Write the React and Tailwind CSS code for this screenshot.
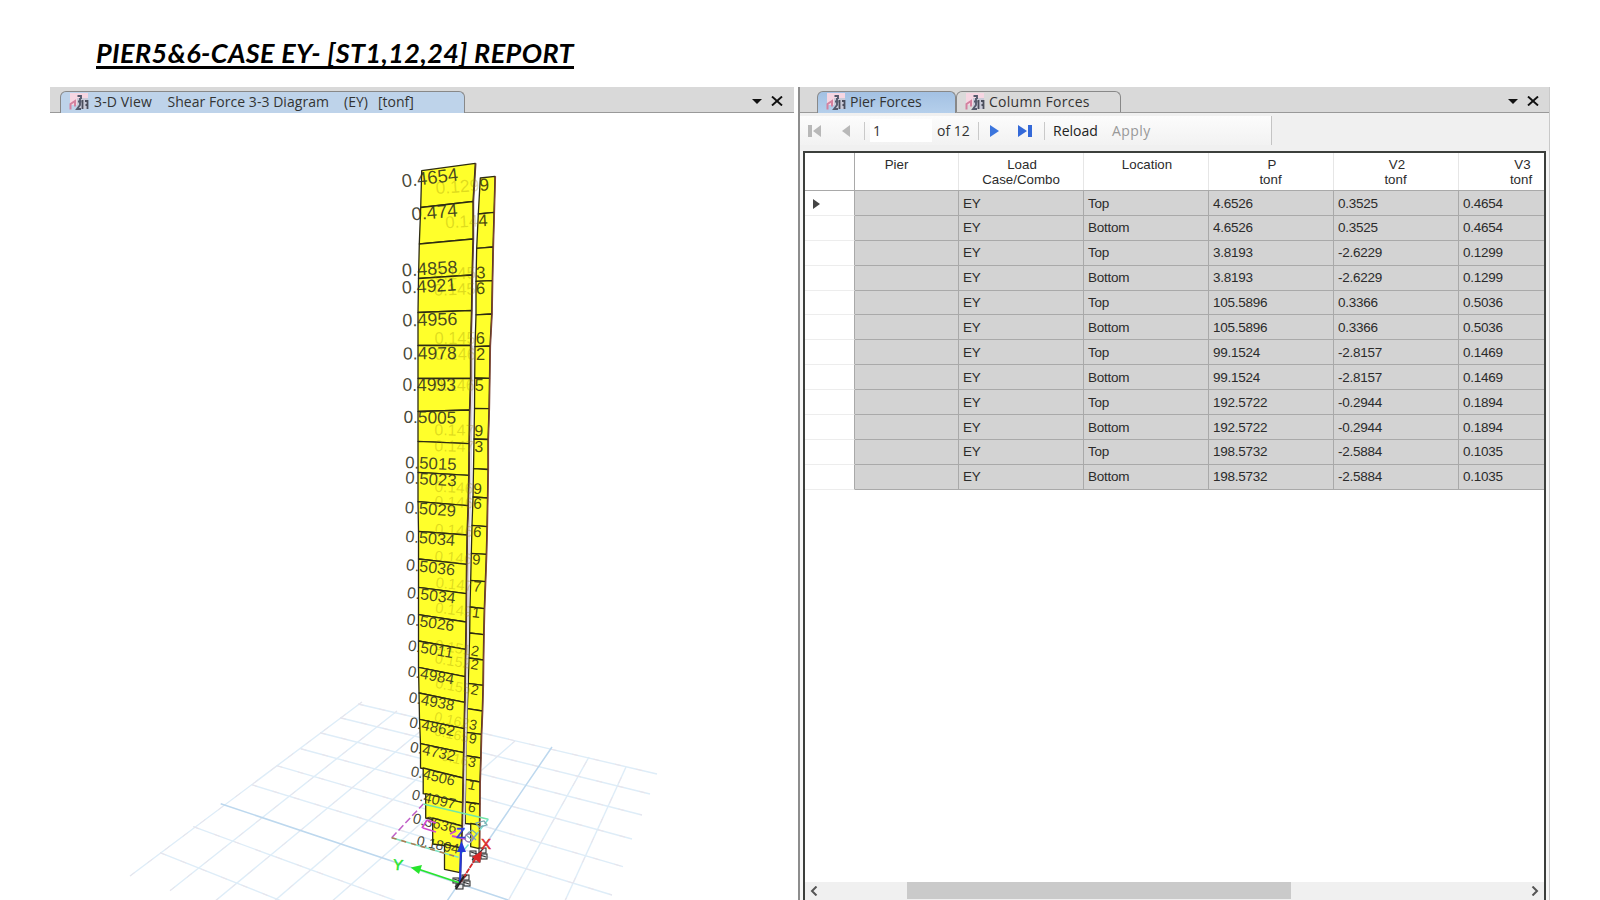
import React from "react";

const LEFT = [
  [421.7, 170.7, 475.3, 163.3], [420.7, 207.5, 473, 201.5], [419.3, 244, 473, 239], [418.5, 278.5, 472, 275],
  [418, 312.5, 471.5, 310.5], [418, 345.5, 470.5, 345.5], [418, 378.3, 470.5, 378.5], [418, 411.5, 469.5, 410],
  [418, 441.3, 469, 443.7], [418, 472.3, 468.7, 475.3], [418, 501.7, 468, 505.7], [418.5, 531.3, 467, 535],
  [418.5, 559, 466.5, 564.3], [418.5, 587.3, 466.2, 593.7], [418.5, 614.7, 466, 622], [418.5, 641, 465.5, 649.3],
  [418.5, 667.3, 465, 676.7], [419, 693, 464.6, 702.3], [419.5, 719.3, 464, 728.7], [420.5, 743.7, 463.5, 752.7],
  [423.2, 768, 463, 778], [425.7, 793.7, 462.5, 802.7], [432.7, 818, 462, 826], [444.5, 844, 461, 848], [444.5, 869.3, 460, 872.7],
];

const RIGHT = [
  [480.3, 178, 495, 176.3], [478.3, 214, 494, 212.3], [476.7, 248.3, 493, 247], [476, 281.3, 492.3, 280.7],
  [476, 314.8, 491.7, 314], [475, 346.7, 490, 346], [474.7, 378, 489.5, 378.3], [474.5, 408.3, 489, 408.7],
  [474, 439, 488, 439.5], [473.5, 468.7, 488, 469.5], [473, 497, 487.5, 498], [472, 525.3, 487, 526.7],
  [471.3, 553.3, 486.3, 554.3], [470.7, 580.3, 485.3, 581.7], [470, 607, 484.3, 608.7], [469.7, 633, 483.7, 634.7],
  [469, 658, 483.3, 660], [468.3, 683.3, 483, 685.3], [467.3, 708.7, 482.3, 711], [466.7, 732.3, 481.3, 734.3],
  [466, 755.7, 480.7, 758], [465.7, 779.3, 479.9, 782], [465.3, 802, 479.7, 804], [470.7, 823.5, 479.5, 825], [470.7, 846.7, 479.3, 848.7],
];

const LABELS = [
  ["0.4654", 402.5, 187.5, -7, 18.5], ["0.474", 412, 220.5, -5, 18.5], ["0.4858", 402.3, 276.5, -3.5, 18.2],
  ["0.4921", 402.3, 293.8, -3.5, 17.8], ["0.4956", 402.5, 326.5, -1.5, 18], ["0.4978", 403, 359.5, -0.5, 17.6],
  ["0.4993", 402.5, 391.3, 0, 17.5], ["0.5005", 403.5, 422.8, 1, 17.2], ["0.5015", 405, 468, 2.5, 16.8],
  ["0.5023", 405, 483.3, 3.5, 16.8], ["0.5029", 404.5, 513, 4, 16.7], ["0.5034", 405, 541.8, 5, 16.3],
  ["0.5036", 405.5, 570, 6.5, 16.1], ["0.5034", 406.5, 597.7, 7, 15.9], ["0.5026", 406, 624.3, 8.5, 15.7],
  ["0.5011", 407.3, 650.3, 10, 15.3], ["0.4984", 407, 676, 10.5, 15.3], ["0.4938", 408, 702, 11, 15.1],
  ["0.4862", 408.5, 727, 12, 15.1], ["0.4732", 409.3, 751.5, 12.5, 15], ["0.4506", 410, 775.7, 13, 14.7],
  ["0.4097", 411, 799, 13, 14.6], ["0.3636", 412, 822.7, 14, 14.6], ["0.1894", 416, 845, 12, 14],
];

const BACK = [
  ["0.129", "9", 479.7, 191, -4, 17.5], ["0.14", "4", 478.5, 226.5, -3, 17], ["0.145", "3", 476.2, 278.5, -2, 17],
  ["0.145", "6", 475.9, 294.3, -2, 16.8], ["0.145", "6", 475.7, 344.2, 0, 16.5], ["0.146", "2", 476, 359.8, 0, 16.5],
  ["0.146", "5", 474.7, 390.6, 0, 16.2], ["0.147", "9", 474.3, 435.9, 1, 16], ["0.147", "3", 474.3, 452, 1, 16],
  ["0.146", "9", 473, 493.7, 3, 15.5], ["0.146", "6", 473, 508.5, 3, 15.5], ["0.146", "6", 472.7, 536.8, 4, 15.3],
  ["0.146", "9", 471.7, 564.3, 5, 15], ["0.147", "7", 472.5, 591.3, 6, 15], ["0.149", "1", 471.5, 617, 7, 14.8],
  ["0.151", "2", 470.3, 655.3, 9, 14.6], ["0.152", "2", 470, 668.7, 9, 14.5], ["0.155", "2", 470, 694, 10, 14.3],
  ["0.162", "3", 468.3, 728.7, 12, 14.2], ["0.165", "9", 468, 742.5, 12, 14], ["0.16", "3", 467.3, 766, 12, 14],
  ["", "1", 467.3, 788.7, 12, 14], ["", "6", 467.3, 811.3, 12, 14],
];

const GRID = [
  [358, 704, 657, 774], [340, 717.7, 650, 794], [320, 732.7, 642, 815], [300.7, 748.7, 632, 839],
  [276.7, 765.7, 623, 866.7], [251.7, 784.7, 612, 895], [193.3, 826.7, 402, 903], [160, 852.7, 284, 902],
  [130, 876, 362, 702], [170, 890.7, 397, 711], [214, 902, 434, 720], [272, 903, 474, 730],
  [330, 903, 515, 741], [508, 901, 589, 757], [564, 903, 626, 767],
];

const quads = (pts) =>
  pts.slice(0, -1).map((p, i) => {
    const n = pts[i + 1];
    const inset = n[0] - p[0] > 2 ? p[0] : n[0];
    return `${p[0]},${p[1]} ${p[2]},${p[3]} ${n[2]},${n[3]} ${inset},${n[1]}`;
  });

function Node({ x, y }) {
  return (
    <g transform={`translate(${x} ${y})`} fill="#ddd" fillOpacity="0.5" stroke="#333" strokeWidth="1.1">
      <rect x="-8" y="-3" width="6" height="5" />
      <rect x="1" y="-6" width="7" height="5" />
      <rect x="-5" y="3" width="7" height="5" />
      <rect x="3" y="0" width="6" height="5" />
      <path d="M-6 6 L6 -6 M-7 -2 L8 3" fill="none" />
    </g>
  );
}

function ForceDiagram() {
  return (
    <svg viewBox="50 113 744 787" className="block h-[787px] w-[744px] font-['Liberation_Sans',sans-serif]">
      <g stroke="#deedf8" strokeWidth="1.4">
        {GRID.map((g, i) => (
          <line key={i} x1={g[0]} y1={g[1]} x2={g[2]} y2={g[3]} />
        ))}
      </g>
      <g stroke="#ece4ea" strokeWidth="1" strokeDasharray="6 16" opacity="0.9">
        {GRID.map((g, i) => (
          <line key={i} x1={g[0]} y1={g[1]} x2={g[2]} y2={g[3]} />
        ))}
      </g>
      <path d="M220.7 803.7 L508 900 M447 901 L552 747" stroke="#bdd8ee" strokeWidth="1.5" fill="none" />

      <g fill="#ffff2b" stroke="#2d2b12" strokeWidth="1.3" strokeLinejoin="round">
        {quads(RIGHT).map((p, i) => (
          <polygon key={i} points={p} />
        ))}
        {quads(LEFT).map((p, i) => (
          <polygon key={i} points={p} />
        ))}
      </g>
      <g fill="none" strokeWidth="1.4">
        <polyline points={RIGHT.map((p) => `${p[2] + 0.4},${p[3]}`).join(" ")} stroke="#7d4435" />
        <polyline points={LEFT.map((p) => `${p[2] + 0.5},${p[3]}`).join(" ")} stroke="#5d3c30" />
        <polyline points={LEFT.slice(5, 23).map((p) => `${p[2] + 2.2},${p[3]}`).join(" ")} stroke="#d9d4dc" strokeWidth="1.5" />
      </g>

      {BACK.map(([a, b, x, y, r, s], i) => (
        <g key={i} transform={`translate(${x} ${y}) rotate(${r})`} fontSize={s}>
          <text textAnchor="end" fill="#8d8000" fillOpacity="0.28">{a}</text>
          <text fill="#35340c" fillOpacity="0.9">{b}</text>
        </g>
      ))}
      {LABELS.map(([t, x, y, r, s], i) => (
        <text key={i} transform={`translate(${x} ${y}) rotate(${r})`} fontSize={s} fill="#303020" fillOpacity="0.88">
          {t}
        </text>
      ))}

      <g fill="none" strokeWidth="1.5">
        <path d="M391.7 837.7 L423.3 804" stroke="#c05fc8" strokeDasharray="7 3" />
        <path d="M423.3 804 L488.3 819.3" stroke="#72e6a8" />
        <path d="M488.3 819.3 L458.3 857.3" stroke="#79dfd2" strokeDasharray="6 2" />
        <path d="M391.7 837.7 L458.3 857.3" stroke="#7fe3c4" />
        <path d="M391.7 837.7 L458.3 857.3" stroke="#b07a50" strokeDasharray="5 5" />
        <path d="M427 820 L436 823 M423 828 L436 832 M427 820 L422 828 M452 836 L466 839 M450 834 L456 831" stroke="#d04bd0" strokeWidth="1.8" />
        <path d="M476 823 l8 -2 l3 4 l-8 2 z M466 835 l6 -5 l5 4 l-5 6 z M468 832 l8 8" stroke="#7ba8b0" strokeWidth="1.2" />
        <circle cx="469" cy="838" r="4" stroke="#9a80b8" />
      </g>

      <Node x={478} y={854} />
      <Node x={461} y={881} />
      <g strokeWidth="1.8" fill="none">
        <path d="M460 883 L418 869" stroke="#27e52d" />
        <path d="M460 883 L476 858" stroke="#d92828" strokeDasharray="5 1" />
        <path d="M460 883 L461 848" stroke="#2438d8" strokeWidth="2.2" />
        <path d="M456 889 L464 876" stroke="#222" />
      </g>
      <path d="M410.7 867.5 L422 865 L419 874 Z" fill="#27e52d" />
      <path d="M482 851 L480 863 L472 857 Z" fill="#d92828" />
      <path d="M461.5 841 L466 852 L457 852 Z" fill="#2438d8" />
      <g fontSize="15">
        <text x="393" y="870" fill="#27e52d" stroke="#27e52d" strokeWidth="0.5" transform="rotate(6 398 866)">Y</text>
        <text x="481" y="849" fill="#df2a2a" stroke="#df2a2a" strokeWidth="0.5">X</text>
        <text x="456" y="838" fill="#3440dc" stroke="#3440dc" strokeWidth="0.5">Z</text>
      </g>
    </svg>
  );
}

function TabIcon() {
  return (
    <svg viewBox="0 0 21 18" className="h-[18px] w-[21px] shrink-0">
      <rect x="1" y="0" width="18" height="12" fill="#f6d6e2" />
      <rect x="8" y="5" width="11" height="11" fill="#c9cad8" />
      <path d="M1.5 16.5 V11 L6 8 V13.5" fill="none" stroke="#d4819f" strokeWidth="2" />
      <path d="M8.5 3 H12 V6 M9 8.5 H12.5 M11 5 V12 L8 16 H12" fill="none" stroke="#555a6d" strokeWidth="1.9" />
      <path d="M13.5 7 V16 M16 8 H18.5 V16 M16.5 12 H18.5" fill="none" stroke="#4b4e5c" strokeWidth="1.8" />
    </svg>
  );
}

function PaneButtons() {
  return (
    <div className="flex items-center gap-[9px]">
      <svg viewBox="0 0 10 5" className="h-[5px] w-2.5"><path d="M0 0 H10 L5 5 Z" fill="#111" /></svg>
      <svg viewBox="0 0 12 10" className="h-2.5 w-3"><path d="M1 0.5 L11 9.5 M11 0.5 L1 9.5" stroke="#111" strokeWidth="1.9" /></svg>
    </div>
  );
}

function Separator() {
  return <div className="h-[18px] w-px shrink-0 bg-[#c9c9c9]" />;
}

const ROWS = [
  ["Top", "4.6526", "0.3525", "0.4654"], ["Bottom", "4.6526", "0.3525", "0.4654"],
  ["Top", "3.8193", "-2.6229", "0.1299"], ["Bottom", "3.8193", "-2.6229", "0.1299"],
  ["Top", "105.5896", "0.3366", "0.5036"], ["Bottom", "105.5896", "0.3366", "0.5036"],
  ["Top", "99.1524", "-2.8157", "0.1469"], ["Bottom", "99.1524", "-2.8157", "0.1469"],
  ["Top", "192.5722", "-0.2944", "0.1894"], ["Bottom", "192.5722", "-0.2944", "0.1894"],
  ["Top", "198.5732", "-2.5884", "0.1035"], ["Bottom", "198.5732", "-2.5884", "0.1035"],
];

const HEADERS = [["Pier", ""], ["Load", "Case/Combo"], ["Location", ""], ["P", "tonf"], ["V2", "tonf"], ["V3", "tonf"]];

function ForcesTable() {
  return (
    <div className="flex h-[749px] w-[743px] flex-col overflow-hidden border-x-2 border-t-2 border-[#3c3f3c] bg-white font-['Liberation_Sans',sans-serif] text-[13.5px] text-[#2b2b2b]">
      <div className="grid h-[38px] w-[780px] shrink-0 grid-cols-[50px_104px_125px_125px_125px_125px_126px] border-b border-[#a9a9a9] text-[13.3px] leading-[14.5px]">
        <div className="border-r border-[#a9a9a9]" />
        {HEADERS.map(([a, b], i) => (
          <div key={i} className="border-r border-[#e6e6e6] pt-[5px] pr-5 pl-[20px] text-center whitespace-nowrap">
            <div className={i === 0 ? "-ml-5" : "ml-[2px]"}>{a}</div>
            <div className={b === "tonf" ? "-ml-px" : "-mx-2"}>{b}</div>
          </div>
        ))}
      </div>
      {ROWS.map((row, i) => (
        <div key={i} className="grid h-[24.9px] w-[780px] shrink-0 grid-cols-[50px_104px_125px_125px_125px_125px_126px] grid-rows-[24.9px] leading-[22px]">
          <div className="flex items-center border-r border-b border-r-[#a9a9a9] border-b-[#ededed] pl-2">
            {i === 0 && <svg viewBox="0 0 7 10" className="mt-[3px] h-2.5 w-[7px]"><path d="M0 0 L7 5 L0 10 Z" fill="#444" /></svg>}
          </div>
          {["", "EY", ...row].map((c, j) => (
            <div key={j} className="border-r border-b border-[#a9a9a9] bg-[#d3d3d3] pt-[1.5px] pl-1 tracking-[-0.02em]">{c}</div>
          ))}
        </div>
      ))}
      <div className="mt-auto flex h-[18px] shrink-0 items-start bg-[#f0f0f0]">
        <svg viewBox="0 0 8 10" className="mt-1 ml-[5px] h-2.5 w-2"><path d="M6.5 0.5 L2 5 L6.5 9.5" fill="none" stroke="#555" strokeWidth="2" /></svg>
        <div className="ml-[89px] h-[17px] w-[384px] bg-[#cacaca]" />
        <svg viewBox="0 0 8 10" className="mt-1 mr-[5px] ml-auto h-2.5 w-2"><path d="M1.5 0.5 L6 5 L1.5 9.5" fill="none" stroke="#555" strokeWidth="2" /></svg>
      </div>
    </div>
  );
}

export default function App() {
  return (
    <div className="flex h-[900px] w-[1600px] flex-col overflow-hidden bg-white font-['Open_Sans','Noto_Sans',sans-serif] text-[#333]">
      <header className="h-[87px] shrink-0 pt-[35px] pl-24">
        <h1 className="h-[34px] w-[478px] border-b-[3px] border-black font-['Lato',sans-serif] text-[27px] leading-[36px] font-bold tracking-[0.41px] whitespace-nowrap text-black italic">
          PIER5&amp;6-CASE EY- [ST1,12,24] REPORT
        </h1>
      </header>
      <main className="flex flex-1 pl-[50px]">
        <section className="w-[744px]">
          <div className="flex h-[26px] items-end border-b border-[#999] bg-[#d9d9d9] pl-2.5">
            <div className="-mb-px flex h-[22px] w-[405px] items-center rounded-t-md border border-b-0 border-[#888] bg-[#bed3ea] pb-[2px] pl-2 text-[14px] whitespace-pre">
              <TabIcon />
              <span className="ml-[4px] w-[73.5px] tracking-[0.01em]">3-D View</span>
              <span className="w-[176.5px] tracking-[0.003em]">Shear Force 3-3 Diagram</span>
              <span className="w-[34px]">(EY)</span>
              <span>[tonf]</span>
            </div>
            <div className="mr-[11px] mb-1.5 ml-auto"><PaneButtons /></div>
          </div>
          <ForceDiagram />
        </section>

        <section className="ml-1 w-[752px] border-x border-l-2 border-r-[#c9c9c9] border-l-[#8d8d8d] bg-[#f7f7f7]">
          <div className="flex h-[26px] items-end border-b border-[#999] bg-[#d9d9d9] pl-[17px] text-[14px]">
            <div className="-mb-px flex h-[22px] w-[139px] items-center rounded-t-md border border-b-0 border-[#888] bg-linear-to-b from-[#a3c1e3] to-[#b5cfeb] pb-[2px] pl-2">
              <TabIcon />
              <span className="ml-[3px] whitespace-nowrap">Pier Forces</span>
            </div>
            <div className="flex h-[21px] w-[165px] items-center rounded-t-md border border-b-0 border-[#888] bg-[#dadada] pb-px pl-2">
              <TabIcon />
              <span className="ml-[3px] tracking-[0.02em] whitespace-nowrap">Column Forces</span>
            </div>
            <div className="mr-[10px] mb-1.5 ml-auto"><PaneButtons /></div>
          </div>

          <div className="flex h-[38px] items-center bg-[#f0f0f0] pb-[3px] text-[14px]">
            <div className="flex h-[29px] w-[472px] items-center border-r border-[#c4c4c4] bg-linear-to-b from-[#fcfcfc] to-[#f2f2f2] pl-2">
              <svg viewBox="0 0 14 12" className="h-3 w-3.5 shrink-0"><path d="M0 0 H4 V12 H0 Z M13 0 V12 L5 6 Z" fill="#b8b8b8" /></svg>
              <svg viewBox="0 0 8 12" className="ml-5 h-3 w-2 shrink-0"><path d="M8 0 V12 L0 6 Z" fill="#b8b8b8" /></svg>
              <div className="ml-[14px]"><Separator /></div>
              <div className="ml-[5px] h-[23px] w-[62px] bg-white pl-[3px] leading-[23px]">1</div>
              <span className="ml-[5px] w-[41px] shrink-0 whitespace-nowrap">of 12</span>
              <Separator />
              <svg viewBox="0 0 9 12" className="ml-[11px] h-3 w-[9px] shrink-0"><path d="M0 0 V12 L9 6 Z" fill="#3b75dd" /></svg>
              <svg viewBox="0 0 14 12" className="ml-[19px] h-3 w-3.5 shrink-0"><path d="M0 0 V12 L9 6 Z M10 0 H14 V12 H10 Z" fill="#3469d8" /></svg>
              <div className="mr-2 ml-[12px]"><Separator /></div>
              <span className="w-[59px] text-[#222]">Reload</span>
              <span className="tracking-[0.03em] text-[#999]">Apply</span>
            </div>
          </div>
          <div className="pl-[3px]"><ForcesTable /></div>
        </section>
      </main>
    </div>
  );
}
